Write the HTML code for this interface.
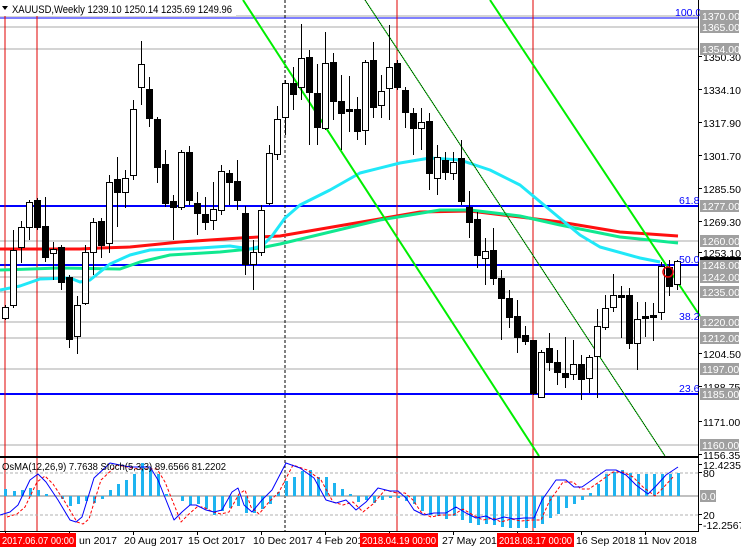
<!DOCTYPE html>
<html><head><meta charset="utf-8"><style>
html,body{margin:0;padding:0;background:#fff;}
#c{position:relative;width:741px;height:551px;overflow:hidden;font-family:"Liberation Sans",sans-serif;}
svg{position:absolute;left:0;top:0;}
</style></head><body><div id="c">
<svg id="s" width="741" height="551" xmlns="http://www.w3.org/2000/svg" font-family="Liberation Sans, sans-serif" font-size="10.5">
<g id="grid" shape-rendering="crispEdges">
<line x1="0" y1="27" x2="698" y2="27" stroke="#a8a8a8"/>
<line x1="0" y1="49" x2="698" y2="49" stroke="#a8a8a8"/>
<line x1="0" y1="241" x2="698" y2="241" stroke="#a8a8a8"/>
<line x1="0" y1="277" x2="698" y2="277" stroke="#a8a8a8"/>
<line x1="0" y1="292" x2="698" y2="292" stroke="#a8a8a8"/>
<line x1="0" y1="322" x2="698" y2="322" stroke="#a8a8a8"/>
<line x1="0" y1="338" x2="698" y2="338" stroke="#a8a8a8"/>
<line x1="0" y1="369" x2="698" y2="369" stroke="#a8a8a8"/>
<line x1="0" y1="445" x2="698" y2="445" stroke="#a8a8a8"/>
<line x1="0" y1="16" x2="698" y2="16" stroke="#a8a8a8"/>
<line x1="0" y1="18" x2="698" y2="18" stroke="#0000ff"/>
<line x1="0" y1="206" x2="698" y2="206" stroke="#0000ff" stroke-width="2"/>
<line x1="0" y1="265" x2="698" y2="265" stroke="#0000ff" stroke-width="2"/>
<line x1="0" y1="394" x2="698" y2="394" stroke="#0000ff" stroke-width="2"/>
<line x1="5" y1="0" x2="5" y2="531" stroke="#e00000"/>
<line x1="37" y1="0" x2="37" y2="531" stroke="#e00000"/>
<line x1="397" y1="0" x2="397" y2="531" stroke="#e00000"/>
<line x1="533" y1="0" x2="533" y2="531" stroke="#e00000"/>
<line x1="285" y1="0" x2="285" y2="531" stroke="#000" stroke-dasharray="3,2"/>
<line x1="0" y1="473" x2="698" y2="473" stroke="#b0b0b0" stroke-dasharray="3,2"/>
<line x1="0" y1="515" x2="698" y2="515" stroke="#b0b0b0" stroke-dasharray="3,2"/>
<line x1="0" y1="496" x2="698" y2="496" stroke="#808080"/>
</g>
<g id="ma"></g>
<g>
<line x1="243" y1="0" x2="539" y2="456" stroke="#00ee00" stroke-width="2"/>
<line x1="490" y1="0" x2="700" y2="316" stroke="#00ee00" stroke-width="2"/>
<line x1="365" y1="0" x2="665" y2="456" stroke="#00ee00" stroke-width="1"/>
<line x1="365" y1="0" x2="665" y2="456" stroke="#000" stroke-width="1" stroke-dasharray="1,1"/>
</g>
<g id="cd" shape-rendering="crispEdges"></g>
<circle cx="668" cy="272" r="5" fill="none" stroke="#e00000" stroke-width="1.5"/>
<g id="ind" shape-rendering="crispEdges"></g>
<g id="st"></g>
<g shape-rendering="crispEdges">
<rect x="0" y="456" width="698" height="2" fill="#000"/>
<line x1="0" y1="531.5" x2="698" y2="531.5" stroke="#000"/>
<line x1="698.5" y1="0" x2="698.5" y2="532" stroke="#000"/>
<rect x="0" y="532" width="741" height="19" fill="#fff"/>
</g>
<g id="ticks" stroke="#000" shape-rendering="crispEdges"></g>
<rect x="0" y="0" width="236" height="16" fill="#fff"/>
<path d="M2,6 L8,6 L5,10 Z" fill="#000"/>
<text x="12" y="13" font-size="11" textLength="220" lengthAdjust="spacingAndGlyphs">XAUUSD,Weekly  1239.10 1250.14 1235.69 1249.96</text>
<text x="2" y="470" font-size="10.5" fill="#000" textLength="224" lengthAdjust="spacingAndGlyphs">OsMA(12,26,9) 7.7638  Stoch(5,3,3) 89.6566 81.2202</text>
<g fill="#0000ff" font-size="10.5">
<text x="675" y="16">100.0</text>
<text x="679" y="204">61.8</text>
<text x="679" y="263">50.0</text>
<text x="679" y="320">38.2</text>
<text x="679" y="392">23.6</text>
</g>
<g font-size="10.5" fill="#000">
<text x="703" y="61">1350.30</text>
<text x="703" y="94">1334.10</text>
<text x="703" y="127">1317.90</text>
<text x="703" y="160">1301.70</text>
<text x="703" y="193">1285.50</text>
<text x="703" y="226">1269.30</text>
<text x="703" y="257">1253.10</text>
<text x="703" y="358">1204.50</text>
<text x="703" y="391">1188.75</text>
<text x="703" y="426">1171.00</text>
<text x="703" y="459">1156.35</text>
<text x="703" y="469">12.4235</text>
<text x="703" y="477">80</text>
<text x="703" y="519">20</text>
<text x="703" y="529">-12.2567</text>
</g>
<g id="lbl" font-size="10.5" fill="#fff"></g>
<g font-size="10.5" fill="#000">
<rect x="0" y="533" width="76" height="14" fill="#ff0000"/>
<text x="2" y="544" fill="#fff" textLength="72" lengthAdjust="spacingAndGlyphs">2017.06.07 00:00</text>
<text x="79" y="544">un 2017</text>
<text x="124" y="544">20 Aug 2017</text>
<text x="188" y="544">15 Oct 2017</text>
<text x="253" y="544">10 Dec 2017</text>
<text x="316" y="544">4 Feb 201</text>
<rect x="360" y="533" width="78" height="14" fill="#ff0000"/>
<text x="362" y="544" fill="#fff" textLength="74" lengthAdjust="spacingAndGlyphs">2018.04.19 00:00</text>
<text x="442" y="544">27 May 201</text>
<rect x="497" y="533" width="77" height="14" fill="#ff0000"/>
<text x="499" y="544" fill="#fff" textLength="73" lengthAdjust="spacingAndGlyphs">2018.08.17 00:00</text>
<text x="576" y="544">16 Sep 2018</text>
<text x="638" y="544">11 Nov 2018</text>
</g>
</svg>
<script>
var NS="http://www.w3.org/2000/svg";
function el(p,t,a){var e=document.createElementNS(NS,t);for(var k in a)e.setAttribute(k,a[k]);document.getElementById(p).appendChild(e);return e;}
function pl(p,pts,col,w,extra){var d=pts.map(function(q){return q.join(",")}).join(" ");var a={points:d,fill:"none",stroke:col,"stroke-width":w,"stroke-linejoin":"round"};for(var k in extra)a[k]=extra[k];el(p,"polyline",a);}
pl("ma",[[0,249],[80,249],[100,248],[130,247],[180,242],[240,238],[280,236],[350,224],[420,212],[470,211],[520,217],[560,222],[620,232],[678,236]],"#ff1010",3);
pl("ma",[[0,270],[60,268],[120,269],[140,262],[170,255],[220,252],[260,248],[280,244],[330,232],[380,220],[440,210],[470,210],[520,216],[560,225],[620,237],[678,243]],"#10e890",3);
pl("ma",[[0,290],[20,286],[40,279],[70,278],[80,282],[90,280],[110,264],[130,255],[150,250],[200,248],[230,246],[250,249],[262,246],[272,236],[285,218],[300,205],[330,190],[360,173],[400,163],[430,158],[460,160],[490,170],[520,185],[550,210],[580,235],[600,247],[640,258],[660,262]],"#20e8f8",3);
var C=[[5,305,307,318,320,1],[13,230,250,305,308,1],[21,221,227,247,263,1],[29,200,202,227,240,1],[37,198,200,227,230,0],[45,197,226,257,262,0],[53,242,249,253,280,1],[61,245,247,282,290,0],[69,275,277,339,348,0],[77,296,305,336,354,1],[85,245,252,303,305,1],[93,218,222,252,275,1],[101,218,221,245,258,0],[109,175,182,243,253,1],[117,157,179,192,227,0],[125,170,178,192,208,1],[133,100,109,175,180,1],[141,41,64,87,105,1],[149,77,89,118,127,0],[157,117,119,167,183,0],[165,150,164,203,207,0],[173,195,201,207,240,0],[181,150,152,207,210,1],[189,146,152,200,205,0],[197,192,203,213,235,0],[205,197,214,222,230,0],[213,182,209,220,230,1],[221,165,171,210,215,1],[229,170,173,182,205,0],[237,160,181,200,210,0],[245,206,213,264,275,0],[253,240,252,264,290,1],[261,205,210,252,256,1],[269,145,153,203,205,1],[277,106,119,154,160,1],[285,80,83,117,135,1],[293,67,83,94,110,0],[301,24,58,87,100,1],[309,50,57,92,145,0],[317,64,93,127,145,0],[325,32,63,128,130,1],[333,53,62,101,120,0],[341,75,101,113,150,0],[349,76,109,111,132,0],[357,97,109,131,140,0],[365,60,62,130,145,1],[373,42,60,107,118,0],[381,75,91,105,118,1],[389,25,67,88,120,1],[397,60,63,87,90,0],[405,87,90,112,128,0],[413,108,113,128,155,0],[421,108,122,128,150,1],[429,113,121,173,190,0],[437,145,157,178,195,1],[445,152,160,172,180,0],[453,152,162,173,180,1],[461,140,158,201,205,0],[469,191,207,222,238,0],[477,212,219,255,268,0],[485,238,251,258,285,1],[493,228,250,278,285,0],[501,270,278,298,340,0],[509,290,298,317,328,0],[517,300,316,337,353,0],[525,326,335,341,345,0],[533,340,340,393,395,0],[541,350,352,397,398,1],[549,333,348,362,371,0],[557,350,362,372,385,0],[565,337,373,377,388,0],[573,340,364,374,380,1],[581,355,364,379,400,0],[589,355,357,378,393,1],[597,309,326,356,398,1],[605,295,308,327,330,1],[613,274,295,307,312,1],[621,286,295,297,338,0],[629,288,295,343,349,0],[637,302,319,343,370,1],[645,302,316,318,337,0],[653,303,315,317,341,0],[661,262,266,312,320,1],[669,260,267,286,296,0],[677,260,261,284,290,1]];
C.forEach(function(c){var x=c[0];
el("cd","line",{x1:x+0.5,y1:c[1],x2:x+0.5,y2:c[4],stroke:"#000"});
var h=Math.max(1,c[3]-c[2]);
el("cd","rect",{x:x-2.5,y:c[2]+0.5,width:6,height:h,fill:c[5]?"#fff":"#000",stroke:"#000"});});
var H=[[5,7],[14,5],[22,6],[30,8],[38,6],[46,2],[62,-3],[70,-10],[78,-8],[86,-5],[94,-7],[102,-3],[110,6],[118,12],[126,16],[134,22],[142,33],[150,28],[158,22],[166,2],[182,-5],[190,-9],[198,-8],[206,-13],[214,-19],[222,-15],[230,-12],[238,-10],[246,-17],[254,-17],[262,-13],[270,-8],[278,4],[286,15],[294,19],[302,25],[310,26],[318,19],[326,19],[334,13],[342,7],[350,2],[358,-6],[366,-4],[374,-7],[382,-4],[390,-2],[398,-2],[406,-5],[414,-8],[422,-15],[430,-19],[438,-20],[446,-23],[454,-20],[462,-24],[470,-27],[478,-29],[486,-28],[494,-29],[502,-31],[510,-32],[518,-32],[526,-32],[534,-32],[542,-28],[550,-22],[558,-18],[566,-12],[574,-8],[582,-4],[590,3],[598,12],[606,22],[614,24],[622,26],[630,23],[638,22],[646,22],[654,22],[662,22],[670,22],[678,23]];
H.forEach(function(b){var y=b[1]>0?496-b[1]:496;el("ind","rect",{x:b[0]-1,y:y,width:3,height:Math.abs(b[1]),fill:"#1eb4f0"});});
var S=[[0,515],[10,512],[18,505],[30,480],[38,474],[46,482],[58,500],[70,520],[76,522],[82,517],[94,478],[110,463],[130,467],[150,467],[158,480],[166,500],[174,520],[182,512],[190,505],[196,505],[206,510],[214,512],[222,510],[232,492],[238,488],[244,505],[252,512],[262,500],[272,490],[286,463],[300,468],[314,478],[326,500],[336,503],[346,500],[356,510],[366,502],[378,488],[390,491],[398,491],[406,498],[414,510],[424,515],[434,513],[446,513],[456,507],[466,513],[476,518],[486,516],[494,520],[504,517],[514,519],[524,518],[534,518],[542,500],[556,480],[566,480],[574,487],[582,487],[592,480],[606,470],[616,470],[626,475],[636,485],[648,494],[656,486],[666,475],[678,467]];
pl("st",S.map(function(p){return [p[0]+7,Math.min(526,p[1]+2)]}).slice(0,-1),"#ff0000",1,{"stroke-dasharray":"3,2"});
pl("st",S,"#0000ff",1);
var L=[[1370,16],[1365,27],[1354,49],[1277,206],[1260,241],[1248,265],[1242,277],[1235,292],[1220,322],[1212,338],[1197,369],[1185,394],[1160,445]];
L.forEach(function(l){el("lbl","rect",{x:700,y:l[1]-6,width:39,height:12,fill:"#a0a0a0"});var t=el("lbl","text",{x:702,y:l[1]+4});t.textContent=l[0]+".00";});
el("lbl","rect",{x:700,y:257,width:41,height:3,fill:"#000"});
el("lbl","rect",{x:700,y:490,width:16,height:12,fill:"#a0a0a0"});var t=el("lbl","text",{x:701,y:500});t.textContent="0.00";
[61,94,127,160,193,226,257,358,391,426,459,469,477,519,529].forEach(function(y){el("ticks","line",{x1:698,y1:y-4.5,x2:702,y2:y-4.5});});
[5,69,133,197,261,325,389,453,517,581,645].forEach(function(x){el("ticks","line",{x1:x+0.5,y1:531,x2:x+0.5,y2:535});});
</script>
</div></body></html>
